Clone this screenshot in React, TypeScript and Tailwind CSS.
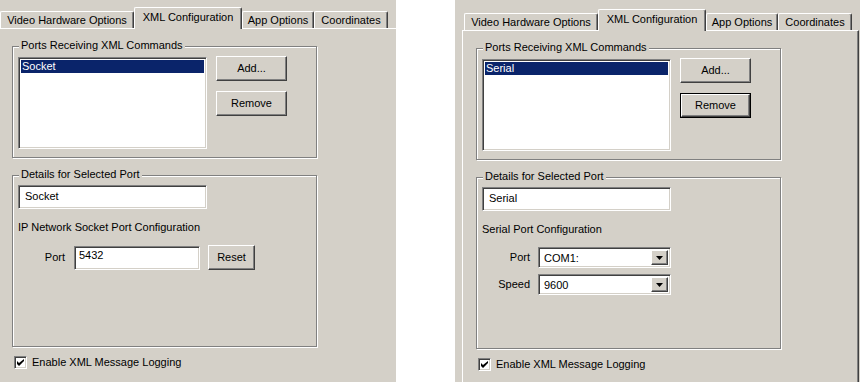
const tabs = [
  { label: "Video Hardware Options", w: "w-[134px]" },
  { label: "XML Configuration", w: "w-[108px]", active: true },
  { label: "App Options", w: "w-[72px]" },
  { label: "Coordinates", w: "w-[74px]" },
];

const raised =
  "bg-[#d4d0c8] border border-t-white border-l-white border-r-[#404040] border-b-[#404040] shadow-[inset_-1px_-1px_0_#808080]";
const sunken =
  "bg-white border border-t-[#808080] border-l-[#808080] border-r-white border-b-white shadow-[inset_1px_1px_0_#404040,inset_-1px_-1px_0_#d4d0c8]";

const Tab = ({ label, w, active }: { label: string; w: string; active?: boolean }) =>
  active ? (
    <div
      className={`relative z-10 -mb-px flex h-[22px] ${w} justify-center rounded-t-[2px] border-t border-l border-r border-t-white border-l-white border-r-[#404040] bg-[#d4d0c8] pt-[3px] shadow-[inset_-1px_0_0_#808080]`}
    >
      {label}
    </div>
  ) : (
    <div
      className={`flex h-[17px] ${w} justify-center rounded-t-[2px] border-t border-l border-r border-t-white border-l-white border-r-[#404040] pt-[2px] shadow-[inset_-1px_0_0_#808080]`}
    >
      {label}
    </div>
  );

const Button = ({ label, w, isDefault }: { label: string; w: string; isDefault?: boolean }) =>
  isDefault ? (
    <div className={`flex h-[25px] ${w} border border-black`}>
      <div className={`flex flex-1 items-center justify-center ${raised}`}>{label}</div>
    </div>
  ) : (
    <div className={`flex h-[25px] ${w} items-center justify-center ${raised}`}>{label}</div>
  );

const GroupBox = ({ title, className, children }: { title: string; className: string; children: React.ReactNode }) => (
  <div className={`relative border border-[#808080] shadow-[1px_1px_0_#fff,inset_1px_1px_0_#fff] ${className}`}>
    <span className="absolute left-[6px] top-[-8px] bg-[#d4d0c8] px-[2px]">{title}</span>
    {children}
  </div>
);

const Combo = ({ value }: { value: string }) => (
  <div className={`flex h-[21px] w-[133px] p-[2px] ${sunken}`}>
    <div className="flex-1 pl-[3px] pt-[2px]">{value}</div>
    <div className={`flex w-[17px] items-center justify-center ${raised}`}>
      <svg width="7" height="4" viewBox="0 0 7 4">
        <path d="M0 0h7L3.5 4z" fill="#000" />
      </svg>
    </div>
  </div>
);

const Dialog = ({ serial, className, pageW }: { serial?: boolean; className: string; pageW: string }) => (
  <div className={`flex flex-col ${className}`}>
    <div className="ml-[2px] flex h-[28px] items-end">
      {tabs.map((t) => (
        <Tab key={t.label} {...t} />
      ))}
    </div>
    <div
      className={`${pageW} h-[380px] border border-t-white border-l-white border-r-[#404040] border-b-[#404040] pl-[13px] pt-[17px] shadow-[inset_-1px_-1px_0_#808080]`}
    >
      <GroupBox title="Ports Receiving XML Commands" className="flex h-[112px] w-[305px] items-start gap-[9px] pl-[5px] pt-[9px]">
        <div className={`mt-px h-[92px] w-[189px] p-[2px] ${sunken}`}>
          <div className="h-[13px] bg-[#0a246a] pl-px leading-[13px] text-white">{serial ? "Serial" : "Socket"}</div>
        </div>
        <div className="flex flex-col gap-[10px]">
          <Button label="Add..." w="w-[71px]" />
          <Button label="Remove" w="w-[71px]" isDefault={serial} />
        </div>
      </GroupBox>

      <GroupBox title="Details for Selected Port" className="mt-[17px] flex h-[172px] w-[305px] flex-col items-start pl-[5px] pt-[9px]">
        <div className={`h-[24px] w-[189px] pl-[6px] pt-[4px] ${sunken}`}>{serial ? "Serial" : "Socket"}</div>
        <div className="mt-[12px]">{serial ? "Serial Port Configuration" : "IP Network Socket Port Configuration"}</div>
        {serial ? (
          <div className="mt-[11px] flex flex-col gap-[6px]">
            <div className="flex items-center gap-[8px]">
              <span className="w-[48px] text-right">Port</span>
              <Combo value="COM1:" />
            </div>
            <div className="flex items-center gap-[8px]">
              <span className="w-[48px] text-right">Speed</span>
              <Combo value="9600" />
            </div>
          </div>
        ) : (
          <div className="mt-[11px] flex items-center">
            <span className="w-[47px] text-right">Port</span>
            <div className={`ml-[9px] h-[24px] w-[126px] pl-[4px] pt-[2px] ${sunken}`}>5432</div>
            <div className="ml-[8px]">
              <Button label="Reset" w="w-[47px]" />
            </div>
          </div>
        )}
      </GroupBox>

      <div className="ml-[2px] mt-[9px] flex items-center gap-[5px]">
        <div className={`flex h-[13px] w-[13px] items-center justify-center ${sunken}`}>
          <svg width="7" height="7" viewBox="0 0 7 7">
            <path d="M0 2v3l2 2 5-5V-0L2 4z" fill="#000" />
          </svg>
        </div>
        <span>Enable XML Message Logging</span>
      </div>
    </div>
  </div>
);

export default function App() {
  return (
    <div className="flex h-[382px] w-[860px] gap-[59px] bg-white font-['Liberation_Sans',Arial,sans-serif] text-[11px] leading-[13px] text-black">
      <div className="h-[382px] w-[396px] overflow-hidden bg-[#d4d0c8]">
        <Dialog className="-ml-[2px]" pageW="w-[430px]" />
      </div>
      <div className="h-[382px] w-[405px] overflow-hidden bg-[#d4d0c8] pl-[7px] pt-[2px]">
        <Dialog serial className="" pageW="w-[397px]" />
      </div>
    </div>
  );
}
